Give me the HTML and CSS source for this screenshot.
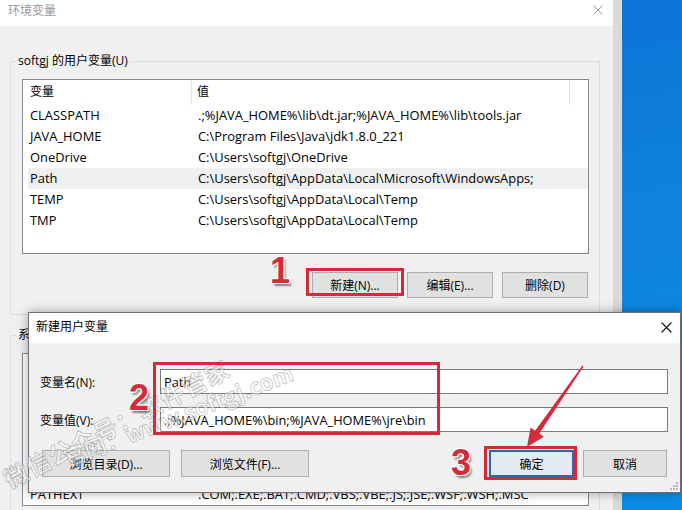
FILE: index.html
```html
<!DOCTYPE html>
<html lang="zh-CN">
<head>
<meta charset="UTF-8">
<title>环境变量</title>
<link rel="stylesheet" href="styles.css">
</head>
<body>
<div class="screen">

  <!-- background window: 环境变量 -->
  <div class="env-window">
    <div class="titlebar">
      <span class="title dim">环境变量</span>
      <svg class="close" width="10" height="10" viewBox="0 0 10 10"><path d="M0.5 0.5L9.5 9.5M9.5 0.5L0.5 9.5" stroke="#9a9a9a" stroke-width="1"/></svg>
    </div>
    <div class="env-body">
      <fieldset class="group">
        <legend>softgj 的用户变量(U)</legend>
        <div class="listview">
          <div class="lv-head"><span>变量</span><span>值</span></div>
          <div class="lv-row"><span>CLASSPATH</span><span>.;%JAVA_HOME%\lib\dt.jar;%JAVA_HOME%\lib\tools.jar</span></div>
          <div class="lv-row"><span>JAVA_HOME</span><span>C:\Program Files\Java\jdk1.8.0_221</span></div>
          <div class="lv-row"><span>OneDrive</span><span>C:\Users\softgj\OneDrive</span></div>
          <div class="lv-row selected"><span>Path</span><span>C:\Users\softgj\AppData\Local\Microsoft\WindowsApps;</span></div>
          <div class="lv-row"><span>TEMP</span><span>C:\Users\softgj\AppData\Local\Temp</span></div>
          <div class="lv-row"><span>TMP</span><span>C:\Users\softgj\AppData\Local\Temp</span></div>
        </div>
        <div class="btn-row">
          <button class="btn">新建(N)...</button>
          <button class="btn">编辑(E)...</button>
          <button class="btn">删除(D)</button>
        </div>
      </fieldset>
      <fieldset class="group group-sys">
        <legend>系统变量(S)</legend>
        <div class="listview">
          <div class="lv-head"><span>变量</span><span>值</span></div>
          <div class="lv-row"><span>ComSpec</span><span>C:\WINDOWS\system32\cmd.exe</span></div>
          <div class="lv-row"><span>DriverData</span><span>C:\Windows\System32\Drivers\DriverData</span></div>
          <div class="lv-row"><span>NUMBER_OF_PROCESSORS</span><span>4</span></div>
          <div class="lv-row"><span>OS</span><span>Windows_NT</span></div>
          <div class="lv-row"><span>Path</span><span>C:\WINDOWS\system32;C:\WINDOWS;C:\WINDOWS\System32\Wbem</span></div>
          <div class="lv-row"><span>PATHEXT</span><span>.COM;.EXE;.BAT;.CMD;.VBS;.VBE;.JS;.JSE;.WSF;.WSH;.MSC</span></div>
        </div>
      </fieldset>
    </div>
  </div>
  <div class="desktop"></div>

  <!-- front dialog: 新建用户变量 -->
  <div class="dialog">
    <div class="titlebar dialog-title">
      <span class="title">新建用户变量</span>
      <svg class="close" width="11" height="11" viewBox="0 0 11 11"><path d="M0.5 0.5L10.5 10.5M10.5 0.5L0.5 10.5" stroke="#111" stroke-width="1.1"/></svg>
    </div>
    <div class="dialog-body">
      <div class="form">
        <label>变量名(N):</label>
        <input class="field" type="text" value="Path">
        <label>变量值(V):</label>
        <input class="field" type="text" value=".;%JAVA_HOME%\bin;%JAVA_HOME%\jre\bin">
      </div>
      <div class="dialog-buttons">
        <div class="btn-group">
          <button class="btn btn-wide">浏览目录(D)...</button>
          <button class="btn btn-wide">浏览文件(F)...</button>
        </div>
        <div class="btn-group btn-group-right">
          <button class="btn btn-default">确定</button>
          <button class="btn">取消</button>
        </div>
      </div>
    </div>
    <svg class="grip" width="8" height="8" viewBox="0 0 8 8" fill="#b5b5b5"><rect x="6" y="0" width="2" height="2"/><rect x="3" y="3" width="2" height="2"/><rect x="6" y="3" width="2" height="2"/><rect x="0" y="6" width="2" height="2"/><rect x="3" y="6" width="2" height="2"/><rect x="6" y="6" width="2" height="2"/></svg>
  </div>

  <!-- watermark -->
  <span class="watermark wm-1">微信公众号：软件管家</span>
  <span class="watermark wm-2">官网：www.softgj.com</span>

  <!-- annotations -->
  <svg class="marks" width="682" height="510" viewBox="0 0 682 510">
    <g fill="none" stroke="#d42a3a" stroke-width="3">
      <rect x="307.5" y="269.5" width="95" height="25"/>
      <rect x="154.5" y="363.5" width="284" height="70"/>
      <rect x="485.5" y="447.5" width="90" height="31"/>
    </g>
    <polygon fill="#d42a3a" points="583.6,366.4 582.4,365.6 535.1,430.8 530.6,427.6 527,447 543.8,436.7 539.3,433.6"/>
  </svg>
  <span class="step step-1">1</span>
  <span class="step step-2">2</span>
  <span class="step step-3">3</span>
</div>
</body>
</html>
```

FILE: styles.css
```css
body {
  margin: 0;
  font-family: "Open Sans", "Noto Sans CJK SC", sans-serif;
  font-size: 12px;
  color: #000;
}

.screen {
  position: relative;
  display: flex;
  width: 682px;
  height: 510px;
  overflow: hidden;
}

.env-window {
  width: 613px;
  flex-shrink: 0;
  background-color: #f0f0f0;
  border-right: 9px solid #d9d9d9;
}

.desktop {
  flex: 1;
  background: linear-gradient(170deg, #0b74d6 0%, #0f82de 40%, #0a8de8 100%);
}

.titlebar {
  display: flex;
  justify-content: space-between;
  align-items: flex-start;
  height: 26px;
  padding: 3px 10px 0 8px;
  box-sizing: border-box;
  background-color: #fff;
  line-height: 16px;
}

.titlebar .close {
  margin-top: 2px;
}

.dim {
  color: #999;
}

.env-body {
  padding: 27px 13px 0 10px;
}

.group {
  margin: 0;
  padding: 10px 10px 16px 11px;
  border: 1px solid #dcdcdc;
  min-width: 0;
}

.group legend {
  padding: 0 2px;
  margin-left: -6px;
  line-height: 16px;
}

.group-sys {
  margin-top: 12px;
  padding-top: 10px;
}

.listview {
  height: 175px;
  box-sizing: border-box;
  padding-left: 5px;
  background-color: #fff;
  border: 1px solid #828790;
  overflow: hidden;
}

.group-sys .listview {
  height: auto;
}

.lv-head {
  display: grid;
  grid-template-columns: 164px 378px;
  height: 25px;
  line-height: 24px;
}

.lv-head span {
  padding-left: 2px;
  border-right: 1px solid #e5e5e5;
}

.lv-head span + span {
  padding-left: 5px;
}

.lv-row {
  display: grid;
  grid-template-columns: 168px 374px;
  height: 21px;
  line-height: 21px;
  font-size: 12.9px;
  white-space: nowrap;
}

.lv-row span {
  padding-left: 2px;
  overflow: hidden;
}

.lv-row.selected {
  background-color: #f0f0f0;
}

.btn-row {
  display: flex;
  justify-content: flex-end;
  gap: 9px;
  margin: 18px 1px 0 0;
}

.btn {
  width: 86px;
  height: 26px;
  padding: 0;
  font: inherit;
  color: #000;
  background-color: #e1e1e1;
  border: 1px solid #adadad;
}

/* dialog */
.dialog {
  position: absolute;
  left: 28px;
  top: 312px;
  width: 651px;
  background-color: #f0f0f0;
  border: 1px solid #707070;
  box-shadow: 0 0 10px rgba(0, 0, 0, 0.35);
}

.dialog-title {
  height: 30px;
  padding: 6px 8px 0 7px;
}

.dialog-title .close {
  margin-top: 3px;
}

.dialog-body {
  padding: 26px 12px 15px 11px;
}

.form {
  display: grid;
  grid-template-columns: 120px 1fr;
  row-gap: 13px;
  align-items: center;
}

.field {
  height: 25px;
  box-sizing: border-box;
  margin: 0;
  padding: 0 3px;
  font-family: inherit;
  font-size: 12.8px;
  border: 1px solid #7a7a7a;
  background-color: #fff;
}

.dialog-buttons {
  display: flex;
  justify-content: space-between;
  margin-top: 18px;
  padding: 0 1px 0 2px;
}

.btn-group {
  display: flex;
  gap: 11px;
}

.btn-group-right {
  gap: 9px;
}

.dialog-buttons .btn {
  height: 27px;
  width: 84px;
}

.dialog-buttons .btn-wide {
  width: 128px;
}

.dialog-buttons .btn-default {
  width: 85px;
  background-color: #e3eaf2;
  border: 2px solid #2f66a8;
}

.grip {
  position: absolute;
  right: 2px;
  bottom: 2px;
}

/* watermark + annotations */
.watermark {
  position: absolute;
  white-space: nowrap;
  font-family: "Noto Sans CJK SC", sans-serif;
  font-weight: bold;
  color: rgba(255, 255, 255, 0.5);
  -webkit-text-stroke: 0.8px rgba(110, 110, 110, 0.45);
  transform-origin: 0 50%;
}

.wm-1 {
  left: 5px;
  top: 465px;
  font-size: 24px;
  line-height: 30px;
  letter-spacing: 1px;
  transform: rotate(-27deg);
}

.wm-2 {
  left: 64px;
  top: 444px;
  font-size: 22px;
  line-height: 28px;
  transform: rotate(-21deg);
}

.marks {
  position: absolute;
  left: 0;
  top: 0;
  pointer-events: none;
}

.step {
  position: absolute;
  font-family: "Liberation Sans", sans-serif;
  font-weight: bold;
  font-size: 36px;
  line-height: 36px;
  color: #d42a3a;
  text-shadow: 1px 0 #fff, -1px 0 #fff, 0 1px #fff, 0 -1px #fff,
    1px 1px #fff, -1px -1px #fff, 1px -1px #fff, -1px 1px #fff,
    2px 3px 2px rgba(0, 0, 0, 0.45);
}

.step-1 { left: 270px; top: 253px; }
.step-2 { left: 129px; top: 380px; }
.step-3 { left: 451px; top: 445px; }
```
